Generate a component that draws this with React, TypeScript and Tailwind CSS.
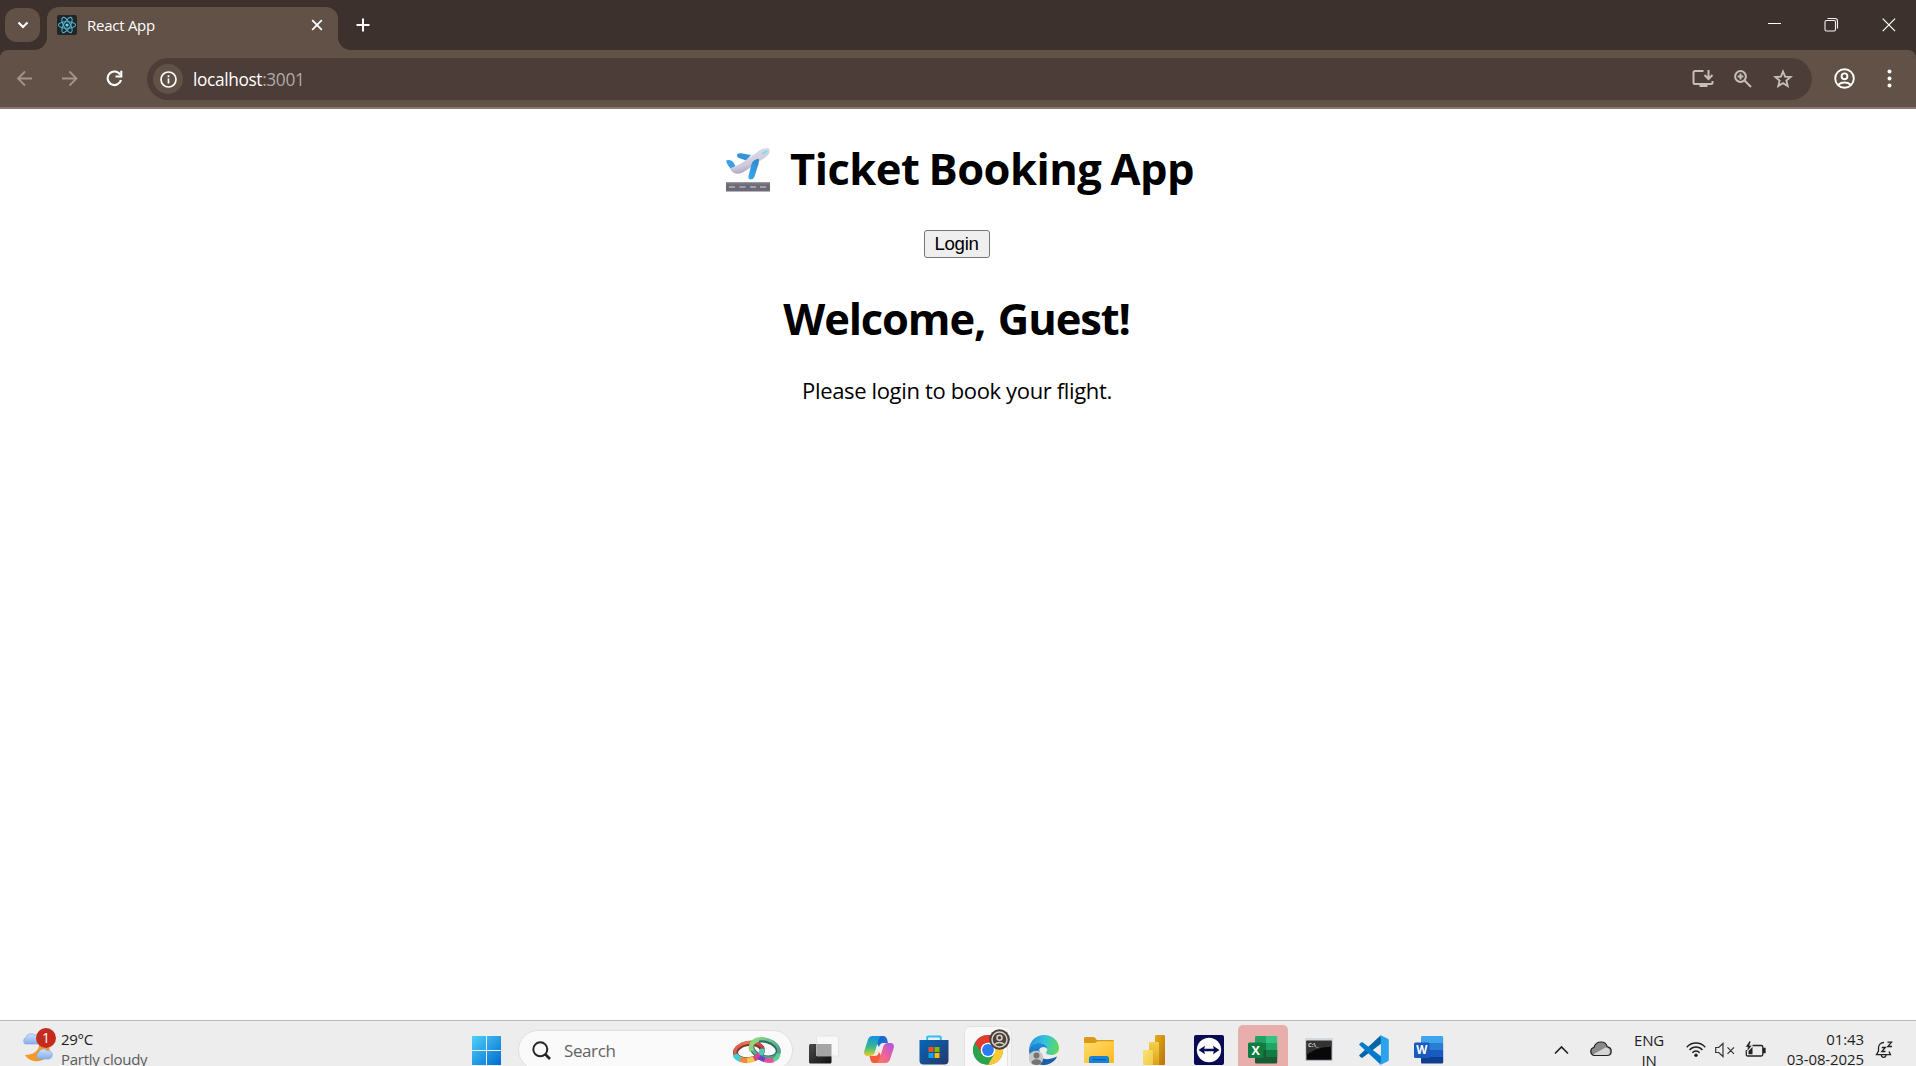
import React from "react";
import type { ReactNode } from "react";

function PlaneTakeoff() {
  return (
    <svg className="-mr-px h-11 w-11 shrink-0 translate-y-px" viewBox="0 0 44 44">
      <defs>
        <linearGradient id="body" x1="0" y1="0" x2="0.4" y2="1">
          <stop offset="0" stopColor="#e4e3ea" />
          <stop offset="0.7" stopColor="#cfcbdd" />
          <stop offset="1" stopColor="#a79cc0" />
        </linearGradient>
        <linearGradient id="wing" x1="1" y1="0" x2="0" y2="1">
          <stop offset="0" stopColor="#2a88c8" />
          <stop offset="1" stopColor="#3aa8ee" />
        </linearGradient>
      </defs>
      <path d="M11 7.500c0-2 2-2.600 4-2.200l10 1.700-5 5.500-7-2.500c-1.300-.5-2-1.300-2-2.500z" fill="#3795d6" />
      <path d="M0 12.600c3-1.500 6-.4 7.500 2L9.500 18l-4 3.500C3 19 1 16.500 0 12.600z" fill="#3aa0e4" />
      <path d="M4 20.500 12 17c3-1.200 5-3 8-5l13-9.200C36 .6 40-.3 43 .6c1.500 2.600.3 6-2.500 8L20 22.500c-5 3.500-9 4-12 2.500-2-1-3.500-3-4-4.500z" fill="url(#body)" />
      <path d="M35.500 5.500 39.500 2.500l3 .200-5 4z" fill="#74dff2" />
      <path d="M33 11c-3-.2-6.500 1.500-7.500 5L22.500 28c-.4 2 .3 3.500 2 3.500s3-.8 3.800-2.500L32.500 16z" fill="url(#wing)" />
      <path d="M0 34.500h44V43.500H0z" fill="#6d6a77" />
      <path d="M0 34.500h44v2H0z" fill="#7a7785" />
      <path d="M3 39h6M13.500 39h6M24 39h6M34 39h6" stroke="#b5b3be" strokeWidth="1.300" />
    </svg>
  );
}

function ReactMark() {
  return (
    <svg className="h-5 w-5 shrink-0" viewBox="0 0 20 20">
      <rect width="20" height="20" rx="2" fill="#222426" />
      <g fill="none" stroke="#4bb3cf" strokeWidth="1.100">
        <ellipse cx="10" cy="10" rx="8.600" ry="3.300" />
        <ellipse cx="10" cy="10" rx="8.600" ry="3.300" transform="rotate(60 10 10)" />
        <ellipse cx="10" cy="10" rx="8.600" ry="3.300" transform="rotate(120 10 10)" />
      </g>
      <circle cx="10" cy="10" r="1.600" fill="#61dafb" />
    </svg>
  );
}

function TabStrip() {
  return (
    <div className="flex h-[50px] shrink-0 bg-[#3c312c] text-white">
      <div className="mt-2 ml-[5px] flex h-[34px] w-[35px] items-center justify-center rounded-xl bg-[#625146]">
        <svg className="h-3 w-3" viewBox="0 0 12 12" fill="none" stroke="white" strokeWidth="2.200">
          <path d="M1.500 3.500 6 8l4.500-4.500" />
        </svg>
      </div>
      <div className="relative mt-[7px] ml-[7px] flex h-[43px] w-[291px] rounded-t-xl bg-[#625146]">
        <svg className="absolute bottom-0 -left-[13px] h-[13px] w-[13px]" viewBox="0 0 13 13">
          <path d="M13 0v13H0A13 13 0 0 0 13 0z" fill="#625146" />
        </svg>
        <svg className="absolute -right-[13px] bottom-0 h-[13px] w-[13px]" viewBox="0 0 13 13">
          <path d="M0 0v13h13A13 13 0 0 1 0 0z" fill="#625146" />
        </svg>
        <div className="mt-2 ml-2.5 flex h-5 flex-1 items-center">
          <ReactMark />
          <span className="ml-[10px] pb-px text-[15px] leading-5 tracking-[-0.26px]">React App</span>
        </div>
        <svg className="mt-3 mr-[15px] h-3 w-3" viewBox="0 0 12 12" stroke="white" strokeWidth="1.800">
          <path d="M1.200 1.200l9.600 9.600M10.800 1.200 1.200 10.800" />
        </svg>
      </div>
      <svg className="mt-[18px] ml-[18px] h-[14px] w-[14px]" viewBox="0 0 14 14" stroke="white" strokeWidth="2">
        <path d="M7 .5v13M.5 7h13" />
      </svg>
      <div className="ml-auto flex">
        <svg className="mt-[17px] mr-[42px] h-[14px] w-[14px]" viewBox="0 0 14 14" stroke="white">
          <path d="M0 6.500h13" />
        </svg>
        <svg className="mt-[17px] mr-[43px] h-[15px] w-[15px]" viewBox="0 0 15 15" fill="none" stroke="#f5f3f2" strokeWidth="1.100">
          <rect x="1" y="3.500" width="10.500" height="10.500" rx="1.500" />
          <path d="M3.500 1.500h7.500a2.500 2.500 0 0 1 2.500 2.500v7.500" />
        </svg>
        <svg className="mt-[18px] mr-[20px] h-[14px] w-[14px]" viewBox="0 0 14 14" stroke="white" strokeWidth="1.200">
          <path d="M.7.7l12.400 12.400M13.100.7.7 13.100" />
        </svg>
      </div>
    </div>
  );
}

function AddressRow() {
  return (
    <div className="h-[59px] shrink-0 bg-[#3c312c]">
      <div className="flex h-[59px] items-start rounded-t-lg bg-[#625146] pt-2 shadow-[inset_0_-2px_0_#8c766e]">
        <svg className="mt-[12px] ml-[16px] h-[17px] w-[17px]" viewBox="0 0 17 17" fill="none" stroke="#a1958e" strokeWidth="1.800">
          <path d="M16 8.500H2M9 1.500l-7 7 7 7" />
        </svg>
        <svg className="mt-[12px] ml-[29px] h-[17px] w-[17px]" viewBox="0 0 17 17" fill="none" stroke="#a1958e" strokeWidth="1.800">
          <path d="M0 8.500h14M7.500 1.500l7 7-7 7" />
        </svg>
        <svg className="mt-[12px] ml-[27px] h-[17px] w-[17px]" viewBox="0 0 17 17" fill="none" stroke="white" strokeWidth="2.100">
          <path d="M14.300 4.800A6.800 6.800 0 1 0 15 10" />
          <path d="M15.300.8v5.700H9.500" />
        </svg>
        <div className="ml-[24px] flex h-[42px] w-[1665px] items-center rounded-full bg-[#4c3d39] pl-1.5">
          <div className="flex h-[30px] w-[30px] items-center justify-center rounded-full bg-[#625146]">
            <svg className="h-[17px] w-[17px]" viewBox="0 0 17 17" fill="none" stroke="white" strokeWidth="1.700">
              <circle cx="8.500" cy="8.500" r="7.500" />
              <path d="M8.500 7.500v5M8.500 4.300v1.900" />
            </svg>
          </div>
          <div className="ml-[10px] pt-px text-[17.300px] leading-6 tracking-[-0.36px] text-white">
            localhost<span className="text-[#b2a9a5]">:3001</span>
          </div>
          <div className="mr-[19px] ml-auto flex items-center text-[#c6bebb]">
            <svg className="h-[20px] w-[22px]" viewBox="0 0 22 20" fill="none" stroke="currentColor" strokeWidth="2">
              <path d="M11.500 2H3.200C2 2 1.500 2.600 1.500 3.500v10c0 1 .6 1.500 1.500 1.500h16c1 0 1.500-.5 1.500-1.500V12" />
              <path d="M16.500 1v8.500M12.500 6l4 4 4-4M7.500 17h8" />
            </svg>
            <svg className="ml-[20px] h-[18px] w-[18px]" viewBox="0 0 18 18" fill="none" stroke="currentColor" strokeWidth="2">
              <circle cx="6.500" cy="6.500" r="5.400" />
              <path d="M10.500 10.500l6.500 6.500M6.500 3.600v5.800M3.600 6.500h5.800" />
            </svg>
            <svg className="ml-[21px] h-[20px] w-[20px]" viewBox="0 0 20 20" fill="none" stroke="currentColor" strokeWidth="1.900">
              <path d="M10 2.500l2.100 5.100 5.500.45-4.200 3.600 1.300 5.400L10 14.200l-4.700 2.850 1.300-5.400-4.200-3.600 5.500-.45z" />
            </svg>
          </div>
        </div>
        <svg className="mt-[10px] ml-[22px] h-[21px] w-[21px]" viewBox="0 0 21 21" fill="none" stroke="white" strokeWidth="1.900">
          <circle cx="10.500" cy="10.500" r="9.300" />
          <circle cx="10.500" cy="8.300" r="2.900" />
          <path d="M4.200 16.800c3.500-3 9-3 12.600 0" />
        </svg>
        <svg className="mt-[11px] ml-[32px] h-[20px] w-[5px]" viewBox="0 0 5 20" fill="white">
          <circle cx="2.500" cy="2.600" r="2" />
          <circle cx="2.500" cy="9.500" r="2" />
          <circle cx="2.500" cy="16.400" r="2" />
        </svg>
      </div>
    </div>
  );
}

function Page() {
  return (
    <main className="flex flex-1 flex-col items-center pt-[30px] text-black">
      <h1 className="flex items-center gap-[21px] pl-[4px] text-[43.500px] leading-[60px] font-bold tracking-[-0.540px] [word-spacing:-1.5px]">
        <PlaneTakeoff />
        <span className="whitespace-nowrap">Ticket Booking App</span>
      </h1>
      <button className="mt-[31px] mr-[2px] h-7 w-[66px] rounded-[3px] border border-[#767676] bg-[#efefef] pr-px font-['Liberation_Sans',sans-serif] text-[18.670px] leading-[26px] tracking-[-0.3px]">
        Login
      </button>
      <h2 className="mt-[31px] mr-[3px] text-[43.500px] leading-[60px] font-bold tracking-[-1.150px] [word-spacing:2.5px]">Welcome, Guest!</h2>
      <p className="mt-[26px] mr-[2px] text-[22px] leading-[30px] tracking-[-0.350px]">Please login to book your flight.</p>
    </main>
  );
}

function WeatherIcon() {
  return (
    <svg className="h-[34px] w-[36px]" viewBox="0 0 36 34">
      <defs>
        <linearGradient id="cl" x1="0" y1="0" x2="0" y2="1">
          <stop offset="0" stopColor="#cfe0fb" />
          <stop offset="1" stopColor="#86aeea" />
        </linearGradient>
      </defs>
      <path d="M19 17c0 6-6 10-14 10 3 5 9 7 14 6 7-1 11-6 10.500-13C28 15 24 12 19 12z" fill="#f29a24" />
      <path d="M5 16a4 4 0 0 1 .6-6.500A6 6 0 0 1 15 7a5 5 0 0 1 4 9z" fill="url(#cl)" stroke="#7fa3dc" strokeWidth=".6" />
      <path d="M18.500 31a3.600 3.600 0 0 1 0-6.500 5 5 0 0 1 8.500-2 4.200 4.200 0 0 1 2 8.500z" fill="url(#cl)" stroke="#7fa3dc" strokeWidth=".6" />
    </svg>
  );
}

function Slot({ children }: { children: ReactNode }) {
  return <div className="flex h-[46px] w-[55px] shrink-0 items-start justify-center pt-[15px]">{children}</div>;
}

const icon = "h-[30px] w-[30px] shrink-0";

function Rings() {
  return (
    <svg className="h-[27px] w-[48px]" viewBox="0 0 48 27" fill="none">
      <defs>
        <linearGradient id="r1" x1="0" y1="0" x2="1" y2="0">
          <stop offset="0" stopColor="#d9604c" />
          <stop offset=".5" stopColor="#e47a4c" />
          <stop offset="1" stopColor="#b8434b" />
        </linearGradient>
        <linearGradient id="r2" x1="0" y1="0" x2="1" y2="1">
          <stop offset="0" stopColor="#8ede86" />
          <stop offset=".5" stopColor="#5fae92" />
          <stop offset="1" stopColor="#3d9c7c" />
        </linearGradient>
      </defs>
      <g transform="rotate(16 32 12)">
        <ellipse cx="32" cy="12" rx="13.500" ry="8.500" stroke="#2f6f62" strokeWidth="5" />
        <ellipse cx="32" cy="11.300" rx="14" ry="9" stroke="url(#r2)" strokeWidth="3" />
      </g>
      <g transform="rotate(-8 16 15)">
        <ellipse cx="16" cy="14.500" rx="13.500" ry="8" stroke="#84332f" strokeWidth="5" />
        <ellipse cx="16" cy="14" rx="14" ry="8.600" stroke="url(#r1)" strokeWidth="3" />
        <path d="M2 15.500c.6 2.500 2.400 4.500 4.800 5.700" stroke="#46cdd2" strokeWidth="5.500" />
        <path d="M6.500 21c2 1.200 4 1.800 6.500 2.100" stroke="#f08a3c" strokeWidth="5.500" />
        <path d="M13 23.100c2.500.2 5 0 7-.6" stroke="#f6c851" strokeWidth="5.500" />
        <path d="M20 22.500c3-.9 5-2 6.600-3.400" stroke="#d8448a" strokeWidth="5.500" />
        <path d="M26.500 19.200c2-1.600 3-3.500 3.300-5.500" stroke="#4ccbb7" strokeWidth="5" />
      </g>
      <path d="M18.500 14c-2-5 1-10 7-11.500" stroke="#8cd67e" strokeWidth="4.500" />
      <path d="M26 20c2 1.500 4 2.300 6 2.800" stroke="#6a45c9" strokeWidth="5" />
      <path d="M32 22.800c3 .8 6 .8 8.500.1" stroke="#e2519b" strokeWidth="5" />
      <path d="M40.500 22.900c3-1 5-3 5-6.400" stroke="#5bcf91" strokeWidth="4" />
    </svg>
  );
}

function TaskIcons() {
  return (
    <>
      <Slot>
        <svg className={icon} viewBox="0 0 30 30">
          <defs>
            <linearGradient id="tv" x1="0" y1="0" x2="1" y2="1"><stop offset="0" stopColor="#4a4a4a" /><stop offset="1" stopColor="#111" /></linearGradient>
          </defs>
          <rect x="0" y="9" width="22.500" height="19.500" rx="1.500" fill="url(#tv)" />
          <rect x="7.500" y="1" width="22" height="20" rx="1" fill="#f8f8f8" stroke="#dcdcdc" strokeWidth=".6" />
          <path d="M7.500 9h15v12h-15z" fill="#a5a5a5" />
        </svg>
      </Slot>
      <Slot>
        <svg className={icon} viewBox="0 0 30 30">
          <defs>
            <linearGradient id="c1" x1="0" y1="0" x2="0" y2="1"><stop offset="0" stopColor="#1590e6" /><stop offset=".55" stopColor="#35b98c" /><stop offset="1" stopColor="#f0cb25" /></linearGradient>
            <linearGradient id="c2" x1="1" y1="0" x2="0" y2="1"><stop offset="0" stopColor="#a259ec" /><stop offset=".5" stopColor="#ec5f9f" /><stop offset="1" stopColor="#fb8152" /></linearGradient>
            <linearGradient id="c3" x1="0" y1="0" x2="1" y2="1"><stop offset="0" stopColor="#1b56d0" /><stop offset="1" stopColor="#1d7dd5" /></linearGradient>
          </defs>
          <path d="M8 1h11c2.500 0 3.500 1.500 4 3l1 4h-5c-2 0-3 1-4 4z" fill="url(#c3)" />
          <path d="M9 1h9c-2 .5-3 2-3.700 4.500L11 16.500C10 20 8.500 21 6 21H3.500C.5 21-.5 18.500.4 15.500L4 4.500C4.900 2 6.500 1 9 1z" fill="url(#c1)" />
          <path d="M21 28H10c-2.500 0-3-1.500-3.500-3l-1-4H10c3 0 4-1 5-4z" fill="#f55a3c" />
          <path d="M21 28h-9c2-.5 3-2 3.700-4.500L19 12.500C20 9 21.500 8 24 8h2.500c3 0 4 2.500 3.100 5.500L26 24.500c-.9 2.500-2.500 3.500-5 3.500z" fill="url(#c2)" />
        </svg>
      </Slot>
      <Slot>
        <svg className={icon} viewBox="0 0 30 30">
          <defs><linearGradient id="st" x1="0" y1="0" x2="1" y2="1"><stop offset="0" stopColor="#0767b8" /><stop offset="1" stopColor="#25376b" /></linearGradient></defs>
          <path d="M8.200 7V2.500c0-.6.300-1 1-1h11.600c.7 0 1 .4 1 1V7" fill="none" stroke="#2cc0f4" strokeWidth="1.900" />
          <path d="M.5 5h29v20.500a4 4 0 0 1-4 4h-21a4 4 0 0 1-4-4z" fill="url(#st)" />
          <path d="M9.500 12h5v5h-5z" fill="#f25022" /><path d="M15.500 12h5v5h-5z" fill="#7fba00" />
          <path d="M9.500 18h5v5h-5z" fill="#00a4ef" /><path d="M15.500 18h5v5h-5z" fill="#ffb900" />
        </svg>
      </Slot>
      <div className="flex h-[46px] w-[55px] shrink-0 pt-[6px]">
        <div className="ml-[3px] h-[60px] w-[48px] shrink-0 rounded-md border border-[#e4e4e4] bg-[#f4f4f4]">
          <div className="flex h-[58px] w-[43px] rounded-md border-r border-[#e2e2e2] bg-[#f9f9f9]">
            <svg className="h-[44px] w-[48px] shrink-0" viewBox="0 0 48 44">
              <circle cx="23" cy="23" r="15" fill="#2ba24c" />
              <path d="M23 15.500H36A15 15 0 0 1 23 38l6.500-11.250z" fill="#fcc934" />
              <path d="M10 15.500A15 15 0 0 1 36 15.500H23l-6.500 11.250z" fill="#e33b2e" />
              <path d="M10 15.500 16.500 26.750 23 30 17 36.700A15 15 0 0 1 10 15.500z" fill="#2ba24c" />
              <circle cx="23" cy="23" r="7.300" fill="white" />
              <circle cx="23" cy="23" r="5.900" fill="#2a7bf0" />
              <circle cx="34.500" cy="12.500" r="10.300" fill="#4b4138" />
              <circle cx="34.500" cy="12.500" r="7.500" fill="none" stroke="#d6d0cc" strokeWidth="1.500" />
              <circle cx="34.500" cy="10.700" r="2.500" fill="none" stroke="#d6d0cc" strokeWidth="1.500" />
              <path d="M29.500 17.500c3-2.500 7-2.500 10 0" fill="none" stroke="#d6d0cc" strokeWidth="1.500" />
            </svg>
          </div>
        </div>
      </div>
      <Slot>
        <svg className={icon} viewBox="0 0 30 30">
          <defs>
            <linearGradient id="e1" x1="0" y1=".3" x2="1" y2=".5"><stop offset="0" stopColor="#2494dc" /><stop offset=".5" stopColor="#31c2df" /><stop offset="1" stopColor="#62d957" /></linearGradient>
            <linearGradient id="e2" x1="0" y1="0" x2="0" y2="1"><stop offset="0" stopColor="#1e8fdb" /><stop offset="1" stopColor="#1257a8" /></linearGradient>
          </defs>
          <path d="M0 14C1 5.500 7.500 0 15 0c8.500 0 15 6 15 13 0 4.500-3.500 7-7.500 7-3.500 0-5.500-1.200-5.500-2.300 0-.8 1.300-1.300 1.300-3.700C18.300 10.500 14.500 8 10 8 5 8 1.500 10.500 0 14z" fill="url(#e1)" />
          <path d="M0 15C.5 10.500 5 8 10 8c4.500 0 8.300 2.500 8.300 6-1-1.200-2.300-2-3.800-2C11 12 9 15.500 9 19c0 6 5 11 11 11-1.500.3-3 0-5 0C6.500 30 0 23.500 0 15z" fill="url(#e2)" />
          <path d="M11.300 14c-3 7 2 11 8.700 10 3-.4 5.500-1.500 8-2.500-1.500 4-6 8-12.500 8.400C10 28 7.500 19 11.300 14z" fill="#1a5fa8" />
          <circle cx="7" cy="23" r="7.300" fill="#c9c7c5" />
          <circle cx="7.500" cy="20.500" r="3" fill="#777573" />
          <path d="M2.500 28c0-5 10-5 10 0-2 2.500-8 2.500-10 0z" fill="#777573" />
        </svg>
      </Slot>
      <Slot>
        <svg className={icon} viewBox="0 0 30 30">
          <defs><linearGradient id="fo" x1="0" y1="0" x2="1" y2="1"><stop offset="0" stopColor="#ffdc6e" /><stop offset="1" stopColor="#fbb91d" /></linearGradient></defs>
          <path d="M0 3.500C0 2.500.7 2 1.500 2H9c1 0 1.700.3 2.300 1l1.500 2H28.500c1 0 1.500.5 1.500 1.500V12H0z" fill="#d99a17" />
          <path d="M0 8h10.500c1 0 1.800-.5 2.500-1.200l.7-.6H30V28H0z" fill="url(#fo)" />
          <path d="M5 28v-4.500C5 22 6 21 7.500 21h15c1.500 0 2.500 1 2.500 2.500V28z" fill="#1683d8" />
          <path d="M8.500 24.700h13" stroke="#0b55a5" strokeWidth="1.200" />
        </svg>
      </Slot>
      <Slot>
        <svg className={icon} viewBox="0 0 30 30">
          <defs>
            <linearGradient id="p1" x1="0" y1="0" x2="1" y2="1"><stop offset="0" stopColor="#e5ad14" /><stop offset="1" stopColor="#b9720f" /></linearGradient>
            <linearGradient id="p2" x1="0" y1="0" x2="0" y2="1"><stop offset="0" stopColor="#f5d14c" /><stop offset="1" stopColor="#dba21b" /></linearGradient>
            <linearGradient id="p3" x1="0" y1="0" x2="1" y2="1"><stop offset="0" stopColor="#f8e276" /><stop offset="1" stopColor="#f1ca44" /></linearGradient>
          </defs>
          <rect x="16" y="0" width="10" height="30" rx="1" fill="url(#p1)" />
          <path d="M10 8c0-.6.400-1 1-1h8c.6 0 1 .4 1 1v22H10z" fill="url(#p2)" />
          <path d="M4 16c0-.6.400-1 1-1h8c.6 0 1 .4 1 1v14H5c-.6 0-1-.4-1-1z" fill="url(#p3)" />
        </svg>
      </Slot>
      <Slot>
        <svg className={icon} viewBox="0 0 30 30">
          <rect width="30" height="30" rx="2" fill="#080b54" />
          <circle cx="15" cy="15" r="12.200" fill="white" />
          <path d="M4.500 15l6.500-4.200-.8 3h9.600l-.8-3L25.500 15 19 19.200l.8-3h-9.600l.8 3z" fill="#080b54" />
        </svg>
      </Slot>
      <div className="h-[46px] w-[55px] shrink-0 overflow-hidden pt-[5px] pr-[3px] pl-[2px]">
        <div className="flex h-[60px] justify-center rounded-t-[5px] bg-[#e8aeab] pt-[10px]">
          <svg className={icon} viewBox="0 0 30 30">
            <path d="M7 2.500C7 1.500 7.500 1 8.500 1H18v7H7z" fill="#21a366" /><path d="M18 1h9.700c1 0 1.500.5 1.500 1.500V8H18z" fill="#33c481" />
            <path d="M7 8h11v7H7z" fill="#107c41" /><path d="M18 8h11.200v7H18z" fill="#21a366" />
            <path d="M7 15h22.200v12c0 1-.5 1.500-1.500 1.500H8.500c-1 0-1.500-.5-1.500-1.500z" fill="#185c37" /><path d="M18 15h11.200v7H18z" fill="#107c41" />
            <rect x="0" y="7.500" width="15.500" height="15.500" rx="1.500" fill="#107c41" />
            <text x="7.750" y="19.700" textAnchor="middle" fontSize="12.500" fontWeight="700" fill="white">X</text>
          </svg>
        </div>
      </div>
      <Slot>
        <svg className={icon} viewBox="0 0 30 30">
          <rect x="1.500" y="3.500" width="27" height="22.500" fill="#b9bcc2" />
          <path d="M1.500 3.500h27v2h-27z" fill="#d4d8df" />
          <rect x="2.500" y="5.800" width="25" height="19" fill="#080808" />
          <path d="M2.500 5.800h25v6c-10 0-18 3-25 8z" fill="#333" />
          <text x="4" y="11.800" fontSize="6" fontWeight="700" fill="#ddd">C:\_</text>
        </svg>
      </Slot>
      <Slot>
        <svg className={icon} viewBox="0 0 30 30">
          <path d="M1 19.500 21.500.5 23 8 3.800 22.500c-.6.400-1.300.3-1.800-.100L.5 21c-.6-.5-.3-1.100.5-1.500z" fill="#0065a9" />
          <path d="M1 10.500 21.500 29.500 23 22 3.800 7.500c-.6-.4-1.300-.3-1.800.1L.5 9c-.6.500-.3 1.100.5 1.500z" fill="#007acc" />
          <path d="M21.700 29.700c-.7.300-1.300.1-1.800-.4.700.6 2 .2 2-.9V1.600c0-1.100-1.300-1.500-2-.9.500-.5 1.100-.7 1.800-.4l6.700 3.200c.9.400 1.400 1 1.400 2v19c0 1-.5 1.600-1.400 2z" fill="#2ba2ec" />
        </svg>
      </Slot>
      <Slot>
        <svg className={icon} viewBox="0 0 30 30">
          <path d="M7 2.500C7 1.500 7.500 1 8.500 1h19.200c1 0 1.500.5 1.500 1.500V8H7z" fill="#41a5ee" />
          <path d="M7 8h22.200v7H7z" fill="#2b7cd3" /><path d="M7 15h22.200v7H7z" fill="#185abd" />
          <path d="M7 22h22.200v5c0 1-.5 1.500-1.500 1.500H8.500c-1 0-1.500-.5-1.500-1.500z" fill="#103f91" />
          <rect x="0" y="7.500" width="15.500" height="15.500" rx="1.500" fill="#185abd" />
          <text x="7.750" y="19.300" textAnchor="middle" fontSize="11.500" fontWeight="700" fill="white">W</text>
        </svg>
      </Slot>
    </>
  );
}

function Tray() {
  return (
    <div className="mr-[23px] ml-auto flex items-start text-[15px] text-[#1f1f1f]">
      <svg className="mt-[25px] h-[10px] w-[15px]" viewBox="0 0 15 10" fill="none" stroke="#222" strokeWidth="1.700">
        <path d="M1 8.500l6.500-6.500L14 8.500" />
      </svg>
      <svg className="mt-[21px] ml-[21px] h-[16px] w-[22px]" viewBox="0 0 22 16">
        <path d="M5.500 14.500c-6 0-6-7-1.500-8C5 3 8 1 11 1c3 0 5.500 2 6.300 4.800 5.500.7 5 8.700-.3 8.700z" fill="#8b8b8b" stroke="#222" strokeWidth="1.200" />
        <path d="M3 13.500 15.500 6.500c5-.5 6 7 1.500 7.500H5c-1 0-1.500-.2-2-.5z" fill="#d5d5d5" />
      </svg>
      <div className="mt-[10px] ml-[22px] flex w-[30px] flex-col items-center leading-5 tracking-[-0.200px]">
        <span>ENG</span>
        <span>IN</span>
      </div>
      <svg className="mt-[21px] ml-[22px] h-[17px] w-[20px]" viewBox="0 0 20 17" fill="none" stroke="#222" strokeWidth="1.300">
        <path d="M.7 6.200c5-5.600 13.600-5.600 18.600 0M3.500 9c3.500-4 9.500-4 13 0M6.300 11.700c2-2.300 5.400-2.300 7.400 0" />
        <circle cx="10" cy="14.300" r="1.700" fill="#222" stroke="none" />
      </svg>
      <svg className="mt-[22px] ml-[9px] h-[17px] w-[20px]" viewBox="0 0 20 17" fill="none" stroke="#333" strokeWidth="1.200">
        <path d="M.7 5.500h3l4.300-4v13l-4.300-4h-3zM12.500 5.300l6.500 6.500M19 5.300l-6.500 6.500" />
      </svg>
      <svg className="mt-[21px] ml-[10px] h-[17px] w-[21px]" viewBox="0 0 21 17" fill="none" stroke="#222" strokeWidth="1.300">
        <path d="M7.500 4.500h8.800c1 0 1.500.6 1.500 1.500v7.500c0 1-.5 1.500-1.500 1.500H2.800c-1 0-1.500-.5-1.500-1.500V9" />
        <path d="M3.500 13.200V10l4-4v7.200z" fill="#222" stroke="none" />
        <path d="M18.500 7.500h1.500v4.200h-1.500z" fill="#222" />
        <path d="M4.500 0 .5 6h2.300l-.8 4.500L7 4.500H4.500L5.800.5z" fill="#222" stroke="#ededed" strokeWidth=".4" />
      </svg>
      <div className="mt-[9px] ml-[18px] flex w-[80px] flex-col items-end leading-5 tracking-[-0.100px]">
        <span>01:43</span>
        <span>03-08-2025</span>
      </div>
      <svg className="mt-[21px] ml-[11px] h-[18px] w-[18px]" viewBox="0 0 18 18" fill="none" stroke="#222" strokeWidth="1.300">
        <path d="M9 1.500C5.500 1.500 3.500 4 3.500 6.800V10L1.500 13.700h14L14 10.500M6.300 14c.3 3.200 4.400 3.200 4.700 0" />
        <path d="M6.800 6.500h3.500l-3.500 4h3.700M12.500 1.200h4L12.800 5.500h4.200" strokeWidth="1.300" />
      </svg>
    </div>
  );
}

function Taskbar() {
  return (
    <footer className="flex h-[46px] shrink-0 overflow-hidden bg-[#ededed] shadow-[inset_0_1px_0_#b9b9b9]">
      <div className="relative flex w-[460px] shrink-0 items-start pl-[20px]">
        <div className="mt-[8px]"><WeatherIcon /></div>
        <span className="absolute top-[8px] left-[36px] flex h-5 w-5 items-center justify-center rounded-full bg-[#c42b1c] pb-px text-[14px] leading-5 text-white">1</span>
        <div className="mt-[9px] ml-[5px] flex flex-col text-[15px] leading-5 tracking-[-0.280px]">
          <span className="text-[#1b1b1b]">29°C</span>
          <span className="text-[#5c5c5c]">Partly cloudy</span>
        </div>
      </div>
      <svg className="mt-4 ml-3 h-[29px] w-[29px] shrink-0" viewBox="0 0 29 29">
        <defs><linearGradient id="win" gradientUnits="userSpaceOnUse" x1="0" y1="0" x2="29" y2="29"><stop offset="0" stopColor="#4fd0fb" /><stop offset="1" stopColor="#006cd0" /></linearGradient></defs>
        <path d="M0 0h14v14H0zM15 0h14v14H15zM0 15h14v14H0zM15 15h14v14H15z" fill="url(#win)" />
      </svg>
      <div className="mt-[10px] ml-[17px] flex h-10 w-[275px] shrink-0 items-center rounded-full border border-[#dfdfdf] bg-[#fafafa] pl-[13px]">
        <svg className="h-[19px] w-[19px]" viewBox="0 0 19 19" fill="none" stroke="#252525" strokeWidth="2">
          <circle cx="8.300" cy="8.300" r="7" /><path d="M13 13l5 5" strokeWidth="2.600" />
        </svg>
        <span className="ml-[13px] pt-[2px] text-[17px] leading-6 tracking-[-0.400px] text-[#636363]">Search</span>
        <div className="mr-[11px] ml-auto"><Rings /></div>
      </div>
      <div className="ml-[3px] flex"><TaskIcons /></div>
      <Tray />
    </footer>
  );
}

export default function App() {
  return (
    <div className="flex h-screen w-full flex-col overflow-hidden bg-white font-['Open_Sans','Noto_Sans',sans-serif]">
      <TabStrip />
      <AddressRow />
      <Page />
      <Taskbar />
    </div>
  );
}
